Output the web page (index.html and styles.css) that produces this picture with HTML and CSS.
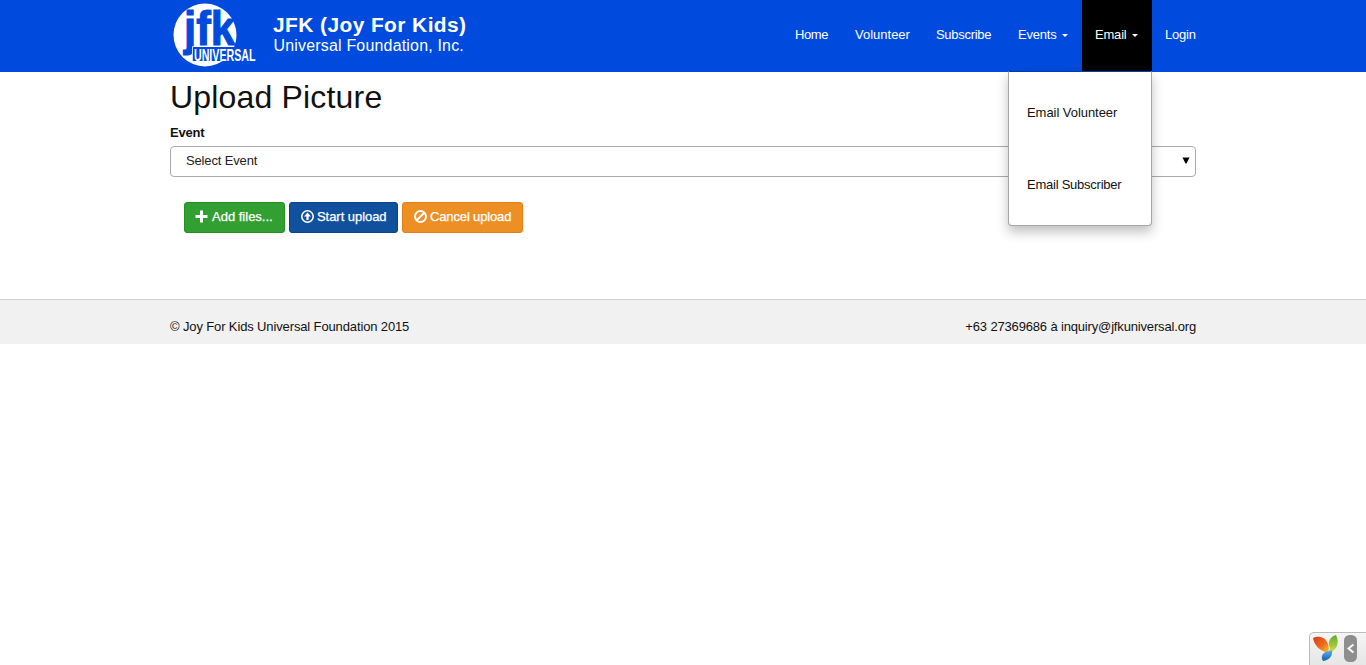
FILE: index.html
```html
<!DOCTYPE html>
<html lang="en">
<head>
<meta charset="utf-8">
<title>Upload Picture</title>
<link rel="stylesheet" href="styles.css">
</head>
<body>
<header class="navbar">
  <div class="container navbar-inner">
    <a class="brand">
      <svg class="logo" width="90" height="71" viewBox="0 0 90 71">
        <circle cx="35" cy="35" r="31.5" fill="#fff"/>
        <text class="logo-jfk" x="14" y="45" textLength="51" lengthAdjust="spacingAndGlyphs">jfk</text>
        <path class="logo-plate" d="M22 47h66v14H22z"/>
        <path d="M22.5 61V46.5H62" fill="none" stroke="#fff" stroke-width=".8"/>
        <text class="logo-universal" x="24" y="60.5" textLength="61.5" lengthAdjust="spacingAndGlyphs">UNIVERSAL</text>
      </svg>
      <svg class="wordmark" width="205" height="71" viewBox="0 0 205 71">
        <text class="wordmark-title" x="3" y="31.6" textLength="193.5" lengthAdjust="spacingAndGlyphs">JFK (Joy For Kids)</text>
        <text class="wordmark-sub" x="3.5" y="51" textLength="190.5" lengthAdjust="spacingAndGlyphs">Universal Foundation, Inc.</text>
      </svg>
    </a>
    <nav class="menu">
      <a class="item home">Home</a>
      <a class="item volunteer">Volunteer</a>
      <a class="item subscribe">Subscribe</a>
      <a class="item events">Events <i class="caret"></i></a>
      <div class="item email active">Email <i class="caret"></i>
        <div class="dropdown"><a>Email Volunteer</a><a class="tight">Email Subscriber</a></div>
      </div>
      <a class="item login">Login</a>
    </nav>
  </div>
</header>
<main class="container content">
  <h1>Upload Picture</h1>
  <div class="label">Event</div>
  <div class="select"><span>Select Event</span><svg width="8" height="7" viewBox="0 0 8 7"><path d="M.5 .5h7L4.5 6.5h-1z"/></svg></div>
  <div class="buttons">
    <a class="btn add"><svg width="13" height="13" viewBox="0 0 13 13"><path d="M5 .5h3V5h4.5v3H8v4.5H5V8H.5V5H5z" fill="#fff"/></svg>Add files...</a>
    <a class="btn start"><svg width="13" height="13" viewBox="0 0 13 13"><circle cx="6.5" cy="6.5" r="5.7" fill="none" stroke="#fff" stroke-width="1.6"/><path d="M6.5 2.6 10 6.5H7.6V10H5.4V6.5H3z" fill="#fff"/></svg>Start upload</a>
    <a class="btn cancel"><svg width="13" height="13" viewBox="0 0 13 13"><path d="M2.7 10.3l7.6-7.6" stroke="#fff" stroke-width="2"/><circle cx="6.5" cy="6.5" r="5.5" fill="none" stroke="#fff" stroke-width="2"/></svg>Cancel upload</a>
  </div>
</main>
<footer class="footer"><div class="container footer-inner"><span class="copyright">© Joy For Kids Universal Foundation 2015</span><span class="contact">+63 27369686 à inquiry@jfkuniversal.org</span></div></footer>
<aside class="debug">
  <svg width="56" height="33" viewBox="0 0 56 33">
    <defs>
      <linearGradient id="warm" x2="1" y2="1"><stop stop-color="#d63a16"/><stop offset=".55" stop-color="#ee6a1c"/><stop offset="1" stop-color="#fbc52c"/></linearGradient>
      <linearGradient id="leaf" x2="0" y2="1"><stop stop-color="#64aa2a"/><stop offset=".6" stop-color="#a6cb38"/><stop offset="1" stop-color="#e4e878"/></linearGradient>
      <linearGradient id="sea" x2="0" y2="1"><stop stop-color="#62b5e8"/><stop offset="1" stop-color="#135eae"/></linearGradient>
    </defs>
    <path d="M3 5C8 2 16 4 18 11c1 3 1 6 0 9C10 18 4 12 3 5z" fill="url(#warm)"/>
    <path d="M26 2c3 6 2 12-3 16l-4 3c1-4 1-6 0-9-1-5 3-9 7-10z" fill="url(#leaf)"/>
    <path d="M19 18c1 0 2-1 3-1 1 5-2 10-9 11-3-5 0-9 6-10z" fill="url(#sea)"/>
    <rect x="34" y="2" width="13" height="27" rx="5.5" fill="#8e8e8e"/>
    <path d="M43.5 11.5L38.5 15.5l5 4" fill="none" stroke="#fff" stroke-width="2"/>
  </svg>
</aside>
</body>
</html>
```
FILE: styles.css
```css
* { box-sizing: border-box; }
body { margin: 0; height: 665px; overflow: hidden; background: #fff; color: #111; font: 13px/18px "Liberation Sans", Arial, sans-serif; }
.container { width: 1026px; margin: 0 auto; }
.navbar { height: 72px; background: #004bdd; color: #fff; }
.navbar-inner, .brand, .menu { display: flex; }
.navbar-inner { justify-content: space-between; }
.logo { overflow: visible; }
.logo-jfk { font: bold 48px "Liberation Sans", sans-serif; fill: #004bdd; stroke: #004bdd; stroke-width: 1.2px; }
.logo-plate { fill: #004bdd; }
.logo-universal { font: bold 17px "Liberation Sans", sans-serif; fill: #fff; }
.wordmark { margin-left: 10px; }
.wordmark-title { font: bold 20px "Liberation Sans", sans-serif; letter-spacing: .4px; fill: #fff; }
.wordmark-sub { font: 16px "Liberation Sans", sans-serif; letter-spacing: .2px; fill: #fff; }
.menu { margin-right: -13px; }
.item { position: relative; flex: none; height: 71px; padding: 26px 0 0 13px; white-space: nowrap; }
.home { width: 60px; letter-spacing: -.4px; }
.volunteer { width: 81px; }
.subscribe { width: 82px; letter-spacing: -.3px; }
.events { width: 77px; letter-spacing: -.2px; }
.email { width: 70px; letter-spacing: -.2px; }
.login { width: 57px; letter-spacing: -.2px; }
.active { background: #000; }
.caret { display: inline-block; margin-left: 2px; vertical-align: middle; border: 3px solid transparent; border-top-color: #fff; border-bottom: 0; }
.dropdown { position: absolute; top: 71px; right: 0; width: 144px; height: 155px; padding-top: 5px; background: #fff; color: #111; border: 1px solid #a5a5a5; border-top-color: #003cb1; border-radius: 0 0 4px 4px; box-shadow: 0 6px 12px rgba(0,0,0,.25); letter-spacing: -.05px; z-index: 2; }
.dropdown a { display: block; height: 72px; padding: 27px 18px; }
.dropdown .tight { letter-spacing: -.24px; }
.content { height: 227px; padding-top: 7px; }
h1 { margin: 0; font-size: 32px; line-height: 36px; font-weight: 400; letter-spacing: .18px; }
.label { margin-top: 9px; font-weight: 700; letter-spacing: -.2px; }
.select { display: flex; justify-content: space-between; height: 31px; margin-top: 4px; padding: 5px 5px 0 15px; border: 1px solid #aaa; border-radius: 4px; color: #222; letter-spacing: -.15px; }
.select svg { margin-top: 5px; }
.buttons { display: flex; gap: 4px; margin: 25px 0 0 14px; }
.btn { display: flex; height: 31px; padding: 5px 0 0 10px; border: 1px solid; border-radius: 3px; color: #fff; white-space: nowrap; -webkit-text-stroke: .25px #fff; }
.btn svg { flex: none; margin: 2px 4px 0 0; }
.add { width: 101px; background: #329f32; border-color: #258e25; }
.start { width: 109px; padding-left: 11px; background: #11509d; border-color: #0b438d; letter-spacing: -.05px; }
.start svg { margin-right: 3px; }
.cancel { width: 121px; padding-left: 11px; background: #ec8f25; border-color: #e57f12; letter-spacing: -.14px; }
.cancel svg { margin-right: 3px; }
.footer { height: 45px; background: #f1f1f1; border-top: 1px solid #ccc; }
.footer-inner { display: flex; justify-content: space-between; padding-top: 18px; }
.copyright { letter-spacing: -.13px; }
.contact { letter-spacing: -.16px; }
.debug { position: absolute; right: 0; bottom: 0; width: 57px; height: 33px; border: 1px solid #bbb; border-width: 1px 0 0 1px; border-radius: 5px 0 0; background: linear-gradient(#f5f5f5, #e6e6e6); overflow: hidden; }
```
